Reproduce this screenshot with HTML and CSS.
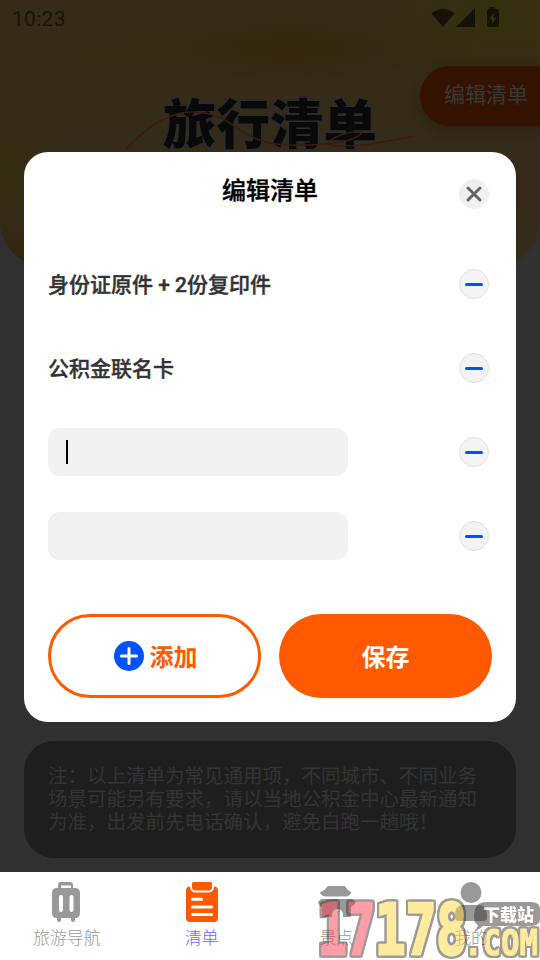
FILE: index.html
```html
<!DOCTYPE html>
<html lang="zh-CN">
<head>
<meta charset="utf-8">
<title>旅行清单</title>
<link rel="stylesheet" href="styles.css">
</head>
<body>
<div class="screen">
  <header class="hero">
    <div class="status">
      <span class="clock">10:23</span>
      <svg class="status-icons" width="70" height="24" viewBox="0 0 70 24">
        <path d="M.5 7.500Q12 -1.500 23.500 7.500L12 21ZM25 21H44V2Z"/>
        <path fill-rule="evenodd" d="M58.500 1h5v2H66q2 0 2 2V19q0 2-2 2H58q-2 0-2-2V5q0-2 2-2h.5ZM62.500 7l-4 6h2.500v5l4-6h-2.500Z"/>
      </svg>
    </div>
    <h1 class="hero-title">旅行清单</h1>
    <svg class="swoosh" width="300" height="60" viewBox="0 0 300 60">
      <path d="M6 59C30 34 50 22 73 22C113 22 117 50 157 54C180 57 220 54 232 49C246 43 245 39 224 44C210 49 205 53 211 55C230 59 270 51 295 46"/>
    </svg>
    <div class="edit-tab">编辑清单</div>
  </header>
  <main class="page">
    <p class="note">注：以上清单为常见通用项，不同城市、不同业务场景可能另有要求，请以当地公积金中心最新通知为准，出发前先电话确认，避免白跑一趟哦！</p>
  </main>
  <nav class="tabs">
    <div class="tab">
      <svg width="40" height="40" viewBox="0 0 40 40" fill="#999">
        <path fill-rule="evenodd" d="M11 6V3q0-3 3-3h9q3 0 3 3v3h2q5 0 5 5v20q0 5-5 5v2q0 2-2 2t-2-2v-2H14v2q0 2-2 2t-2-2v-2q-5 0-5-5V11q0-5 5-5ZM14 3.500V6h10V3.500ZM12 15V28q0 2 2 2t2-2V15q0-2-2-2t-2 2M22.500 15V28q0 2 2 2t2-2V15q0-2-2-2t-2 2"/>
      </svg>
      <span>旅游导航</span>
    </div>
    <div class="tab tab-on">
      <svg width="40" height="40" viewBox="0 0 40 40">
        <rect x="4" y="4.500" width="32" height="35.500" rx="4" fill="#ff5a00"/>
        <rect x="9" y="-2" width="22" height="11.500" rx="4.500" fill="#ff5a00" stroke="#fff" stroke-width="2"/>
        <rect x="8" y="-4" width="24" height="4" fill="#fff"/>
        <path d="M10 3q0-3 3-3H27q3 0 3 3V6H10Z" fill="#ff5a00"/>
        <path d="M10.500 17.300H19.500M10.500 25H29.500M10.500 32.500H29.500" stroke="#fff" stroke-width="3" stroke-linecap="round"/>
      </svg>
      <span>清单</span>
    </div>
    <div class="tab">
      <svg width="40" height="40" viewBox="0 0 40 40" fill="#999">
        <path d="M11 4H28q3 5 6 6q1 0 0 1q-1 3-4 3.500H8q-4-1-5-4q5-2 8-6.500M4 17H35l4 3q-2 4-5 5V35H26V32q-1-5-5.500-5t-5.500 5v3H5V25q-3-1-4-5Z"/>
      </svg>
      <span>景点</span>
    </div>
    <div class="tab">
      <svg width="40" height="40" viewBox="0 0 40 40" fill="#999">
        <circle cx="19" cy="10.500" r="10.500"/>
        <path d="M9 23H29q6 2 6 10v3q0 3-4 3H7q-4 0-4-3V33q0-8 6-10"/>
      </svg>
      <span>我的</span>
    </div>
  </nav>
  <section class="dialog">
    <div class="dialog-head">
      <h2>编辑清单</h2>
      <svg class="close" width="30" height="30" viewBox="0 0 30 30"><circle cx="15" cy="15" r="15" fill="#f0f0f0"/><path d="M9 9L21 21M21 9L9 21" stroke="#666" stroke-width="3" stroke-linecap="round"/></svg>
    </div>
    <div class="row"><span>身份证原件 + 2份复印件</span><i class="minus"></i></div>
    <div class="row"><span>公积金联名卡</span><i class="minus"></i></div>
    <div class="row"><div class="field"><b class="caret"></b></div><i class="minus"></i></div>
    <div class="row"><div class="field"></div><i class="minus"></i></div>
    <div class="actions">
      <div class="btn add">
        <svg width="30" height="30" viewBox="0 0 30 30"><circle cx="15" cy="15" r="15" fill="#0052ff"/><path d="M7.500 15H22.500M15 7.500V22.500" stroke="#fff" stroke-width="3" stroke-linecap="round"/></svg>
        <span>添加</span>
      </div>
      <div class="btn save"><span>保存</span></div>
    </div>
  </section>
  <svg class="watermark" width="224" height="63" viewBox="0 0 224 63">
    <path class="bubble" d="M170 5H215q9 0 9 7V22q0 7-9 7H167l-8 6l3-7q-4-2-4-8q0-15 12-15Z"/>
    <text class="site" x="167" y="24" textLength="51" lengthAdjust="spacingAndGlyphs">下载站</text>
    <g class="outlined">
      <text class="digits red" x="2" y="57" textLength="57" lengthAdjust="spacingAndGlyphs">17</text>
      <text class="digits" x="59" y="57" textLength="92" lengthAdjust="spacingAndGlyphs">178</text>
    </g>
    <g class="outlined thin">
      <text class="com" x="148" y="58" textLength="74" lengthAdjust="spacingAndGlyphs">.COM</text>
    </g>
  </svg>
</div>
</body>
</html>
```
FILE: styles.css
```css
* { box-sizing: border-box; }
body { margin: 0; font-family: Roboto, "Noto Sans CJK SC", sans-serif; }
h1, h2, p { margin: 0; }
.screen {
  position: relative;
  width: 540px;
  height: 960px;
  overflow: hidden;
  display: flex;
  flex-direction: column;
  background: #303030;
}
.hero {
  position: relative;
  height: 268px;
  flex: none;
  border-radius: 0 0 48px 48px;
  background:
    radial-gradient(ellipse 190px 45px at 290px 48px, #33260c, transparent),
    radial-gradient(ellipse 140px 80px at 510px 20px, #34300d, transparent),
    radial-gradient(ellipse 130px 30px at 120px 55px, #332c12, transparent),
    radial-gradient(ellipse 80px 60px at 0 175px, #322d0d, transparent),
    radial-gradient(ellipse 100px 50px at 20px 260px, #32250d, transparent),
    linear-gradient(#352b18 0, #342c1a 140px, #35291a 190px, #332d1c 100%);
}
.status {
  height: 36px;
  padding: 0 39px 0 12px;
  display: flex;
  align-items: center;
  justify-content: space-between;
}
.clock { font-size: 21px; color: #17140b; letter-spacing: .3px; padding-top: 2px; }
.status-icons { fill: #151207; margin-top: -1px; }
.hero-title {
  margin-top: 46px;
  text-align: center;
  font: 900 53.500px/78px "Noto Sans CJK SC", sans-serif;
  color: #090909;
  -webkit-text-stroke: 3px #2c2c2c;
  paint-order: stroke fill;
}
.swoosh {
  position: absolute;
  left: 120px;
  top: 90px;
  fill: none;
  stroke: #3b1c0d;
  stroke-width: 1.5;
}
.edit-tab {
  position: absolute;
  right: 0;
  top: 66px;
  width: 120px;
  height: 60px;
  padding-left: 24px;
  border-radius: 30px 0 0 30px;
  background: #331300;
  color: #383838;
  font-size: 21px;
  line-height: 59px;
  white-space: nowrap;
  box-shadow: 0 4px 12px rgba(20, 15, 0, .35);
}
.page { flex: 1; padding: 473px 24px 0; }
.note {
  height: 117px;
  padding: 24px 33px 0 24px;
  border-radius: 30px;
  background: #1e1e1e;
  color: #343434;
  font-size: 19.500px;
  line-height: 23px;
}
.tabs {
  height: 88px;
  flex: none;
  padding-right: 1px;
  display: grid;
  grid-template-columns: repeat(4, 1fr);
  background: #fff;
}
.tab {
  display: flex;
  flex-direction: column;
  align-items: center;
  padding-top: 10px;
  color: #999;
  font-size: 17px;
  font-weight: 300;
  line-height: 32px;
}
.tab svg { overflow: visible; }
.tab span { margin-left: -1px; }
.tab-on { color: #6b66ff; }
.dialog {
  position: absolute;
  left: 24px;
  top: 152px;
  width: 492px;
  height: 570px;
  padding: 0 24px;
  border-radius: 24px;
  background: #fff;
}
.dialog-head {
  display: grid;
  grid-template-columns: 30px 1fr 30px;
  height: 90px;
  padding: 0 3px;
}
h2 {
  grid-column: 2;
  text-align: center;
  font-size: 24px;
  font-weight: 500;
  line-height: 78px;
  color: #000;
  -webkit-text-stroke: .4px #000;
}
.close { margin-top: 27px; }
.row {
  height: 84px;
  padding-right: 3px;
  display: flex;
  align-items: center;
  justify-content: space-between;
  font-size: 21px;
  font-weight: 500;
  color: #333;
}
.row span { padding-bottom: 2px; -webkit-text-stroke: .4px #333; }
.minus {
  width: 30px;
  height: 30px;
  border-radius: 50%;
  border: 1.500px solid #e2e2e2;
  background: #f3f3f3;
  display: grid;
  place-items: center;
}
.minus::before {
  content: "";
  width: 18px;
  height: 3px;
  border-radius: 2px;
  background: #0052ff;
}
.field {
  width: 300px;
  height: 48px;
  padding-left: 18px;
  border-radius: 12px;
  background: #f1f1f1;
  display: flex;
  align-items: center;
}
.caret { width: 2px; height: 24px; background: #000; }
.actions {
  margin-top: 36px;
  display: grid;
  grid-template-columns: 1fr 1fr;
  gap: 18px;
}
.btn {
  height: 84px;
  border-radius: 42px;
  display: flex;
  align-items: center;
  justify-content: center;
  gap: 6px;
  font-size: 24px;
  font-weight: 700;
}
.btn span { padding-bottom: 1px; }
.add { border: 3px solid #ff5a00; color: #ff5a00; padding-left: 2px; }
.save { background: #ff5a00; color: #fff; }
.watermark {
  position: absolute;
  left: 316px;
  top: 897px;
  opacity: .5;
}
.bubble { fill: #3c3834; }
.site { font: 900 17px "Noto Sans CJK SC", sans-serif; fill: #fff; }
.digits, .com {
  font-family: "DejaVu Sans Mono", monospace;
  font-weight: 700;
  fill: #ffd940;
  stroke: #ffd940;
  stroke-width: 3px;
}
.digits { font-size: 69px; }
.red { fill: #ff4050; stroke: #ff4050; }
.com { font-size: 36px; stroke-width: 1px; }
.outlined {
  filter: drop-shadow(2px 0 0 #3c3834) drop-shadow(-2px 0 0 #3c3834) drop-shadow(0 2px 0 #3c3834) drop-shadow(0 -2px 0 #3c3834);
}
```
